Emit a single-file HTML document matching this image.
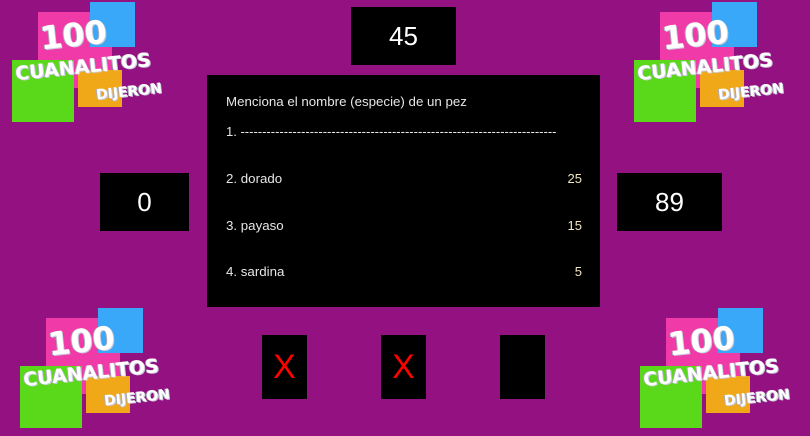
<!DOCTYPE html><html><head><style>
body{margin:0;width:810px;height:435px;background:#931181;position:relative;overflow:hidden;font-family:"Liberation Sans",sans-serif;}
.b{position:absolute;background:#000;color:#fff;}
.n{display:flex;align-items:center;justify-content:center;font-size:26px;}
.logo{position:absolute;width:170px;height:130px;}
.logo div{position:absolute;}
.t{color:#fff;font-weight:bold;font-family:"DejaVu Sans",sans-serif;text-shadow:1px 1px 0 #ccd,-1px 0 0 #aab;transform:rotate(-6deg);white-space:nowrap;}
.r{position:absolute;left:226px;font-size:13.3px;color:#e6e6e6;}
.v{position:absolute;right:228px;font-size:13px;color:#f0e6c0;}
.x{color:#f00;font-size:34px;}
</style></head><body>
<div class="logo" style="left:0;top:0">
<div style="left:38px;top:12px;width:74px;height:76px;background:#f03aa8"></div>
<div style="left:90px;top:2px;width:45px;height:45px;background:#3aa8f8"></div>
<div style="left:78px;top:70px;width:44px;height:37px;background:#f0a818"></div>
<div style="left:12px;top:60px;width:62px;height:62px;background:#5ad81a"></div>
<div class="t" style="left:40px;top:16px;font-size:32px">100</div>
<div class="t" style="left:15px;top:56px;font-size:19px">CUANALITOS</div>
<div class="t" style="left:96px;top:84px;font-size:14px">DIJERON</div>
</div>
<div class="logo" style="left:622px;top:0">
<div style="left:38px;top:12px;width:74px;height:76px;background:#f03aa8"></div>
<div style="left:90px;top:2px;width:45px;height:45px;background:#3aa8f8"></div>
<div style="left:78px;top:70px;width:44px;height:37px;background:#f0a818"></div>
<div style="left:12px;top:60px;width:62px;height:62px;background:#5ad81a"></div>
<div class="t" style="left:40px;top:16px;font-size:32px">100</div>
<div class="t" style="left:15px;top:56px;font-size:19px">CUANALITOS</div>
<div class="t" style="left:96px;top:84px;font-size:14px">DIJERON</div>
</div>
<div class="logo" style="left:8px;top:306px">
<div style="left:38px;top:12px;width:74px;height:76px;background:#f03aa8"></div>
<div style="left:90px;top:2px;width:45px;height:45px;background:#3aa8f8"></div>
<div style="left:78px;top:70px;width:44px;height:37px;background:#f0a818"></div>
<div style="left:12px;top:60px;width:62px;height:62px;background:#5ad81a"></div>
<div class="t" style="left:40px;top:16px;font-size:32px">100</div>
<div class="t" style="left:15px;top:56px;font-size:19px">CUANALITOS</div>
<div class="t" style="left:96px;top:84px;font-size:14px">DIJERON</div>
</div>
<div class="logo" style="left:628px;top:306px">
<div style="left:38px;top:12px;width:74px;height:76px;background:#f03aa8"></div>
<div style="left:90px;top:2px;width:45px;height:45px;background:#3aa8f8"></div>
<div style="left:78px;top:70px;width:44px;height:37px;background:#f0a818"></div>
<div style="left:12px;top:60px;width:62px;height:62px;background:#5ad81a"></div>
<div class="t" style="left:40px;top:16px;font-size:32px">100</div>
<div class="t" style="left:15px;top:56px;font-size:19px">CUANALITOS</div>
<div class="t" style="left:96px;top:84px;font-size:14px">DIJERON</div>
</div>
<div class="b n" style="left:351px;top:7px;width:105px;height:58px">45</div>
<div class="b n" style="left:100px;top:173px;width:89px;height:58px">0</div>
<div class="b n" style="left:617px;top:173px;width:105px;height:58px">89</div>
<div class="b" style="left:207px;top:75px;width:393px;height:232px"></div>
<div class="r" style="top:94px">Menciona el nombre (especie) de un pez</div>
<div class="r" style="top:124px;font-size:13px">1. -------------------------------------------------------------------------</div>
<div class="r" style="top:171px">2. dorado</div><div class="v" style="top:171px">25</div>
<div class="r" style="top:218px">3. payaso</div><div class="v" style="top:218px">15</div>
<div class="r" style="top:264px">4. sardina</div><div class="v" style="top:264px">5</div>
<div class="b n x" style="left:262px;top:335px;width:45px;height:64px">X</div>
<div class="b n x" style="left:381px;top:335px;width:45px;height:64px">X</div>
<div class="b n" style="left:500px;top:335px;width:45px;height:64px"></div>
</body></html>
